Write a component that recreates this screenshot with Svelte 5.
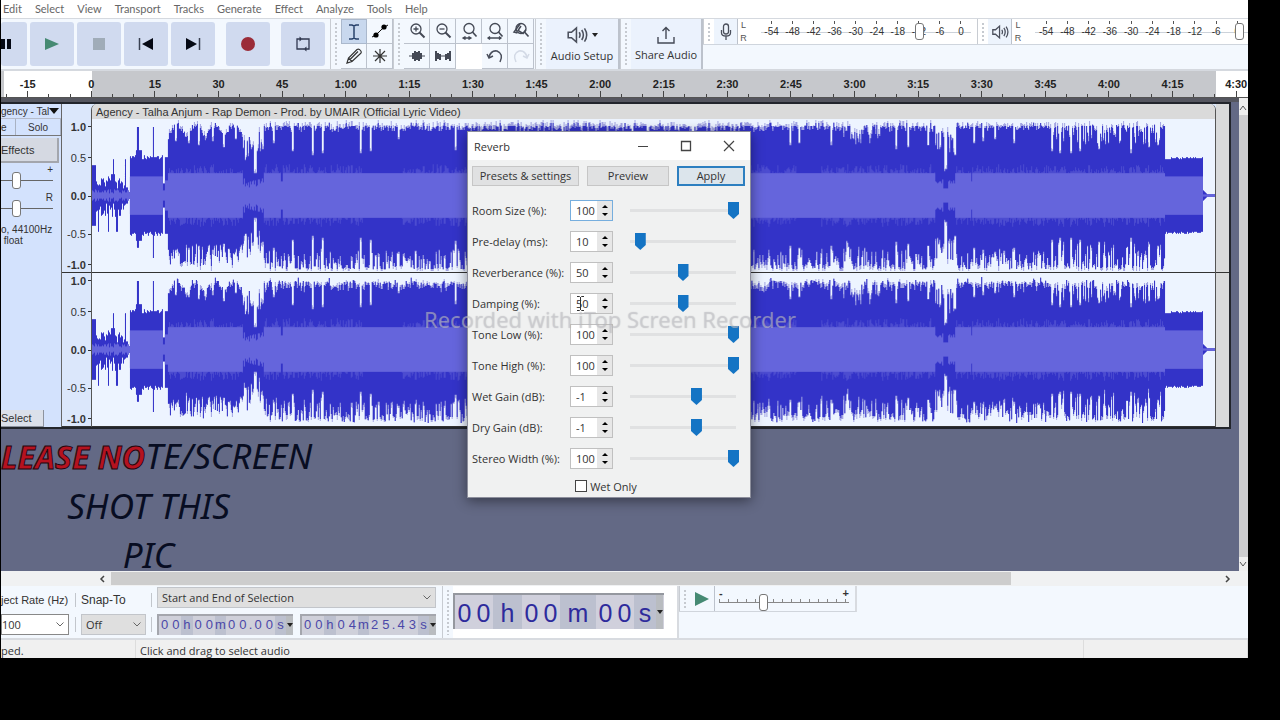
<script lang="ts">
  const menus = ['Edit', 'Select', 'View', 'Transport', 'Tracks', 'Generate', 'Effect', 'Analyze', 'Tools', 'Help'];
  const times = ['-15', '0', '15', '30', '45', '1:00', '1:15', '1:30', '1:45', '2:00', '2:15', '2:30', '2:45', '3:00', '3:15', '3:30', '3:45', '4:00', '4:15', '4:30'];
  const levels = ['-54', '-48', '-42', '-36', '-30', '-24', '-18', '-12', '-6', '0'];
  const meters = [
    { name: 'Recording level', icon: 'mic', value: 77 },
    { name: 'Playback level', icon: 'speaker', value: 99 }
  ];
  const scale = ['1.0', '0.5', '0.0', '-0.5', '-1.0'];

  const params = [
    { label: 'Room Size (%):', value: 100, min: 0, max: 100 },
    { label: 'Pre-delay (ms):', value: 10, min: 0, max: 130 },
    { label: 'Reverberance (%):', value: 50, min: 0, max: 100 },
    { label: 'Damping (%):', value: 50, min: 0, max: 100 },
    { label: 'Tone Low (%):', value: 100, min: 0, max: 100 },
    { label: 'Tone High (%):', value: 100, min: 0, max: 100 },
    { label: 'Wet Gain (dB):', value: -1, min: -20, max: 10 },
    { label: 'Dry Gain (dB):', value: -1, min: -20, max: 10 },
    { label: 'Stereo Width (%):', value: 100, min: 0, max: 100 }
  ];

  const clipWidth = 1124;
  const mid = 76;

  // quiet moments inside the loud part: [position, height left]
  const dips = [
    [83, 54], [96, 52], [106, 50], [120, 54], [131, 48], [143, 56], [153, 38], [162, 22], [163, 22], [170, 46], [181, 52],
    [200, 44], [220, 40], [230, 42], [268, 42], [278, 44], [306, 56], [363, 45], [410, 55], [470, 48], [540, 52], [600, 46],
    [698, 50], [707, 52], [739, 50], [804, 46], [816, 48], [836, 50], [853, 24], [854, 26], [863, 40], [862, 44], [882, 52],
    [891, 54], [903, 56], [922, 52], [960, 44], [968, 42], [979, 42], [988, 44], [1007, 46], [1039, 42], [1057, 48], [1066, 50]
  ];

  function random(seed: number) {
    let s = seed;
    return () => {
      s = (s * 16807) % 2147483647;
      return s / 2147483647;
    };
  }

  function peakAt(x: number, r: number, low: boolean) {
    if (x < 36) return r > 0.88 ? 36 : x < 4 ? 30 : 7 + r * 14 * (x > 8 && x < 30 ? 1.2 : 0.7);
    if (x < 38) return 3;
    if (x < 71) {
      if (x === 45 || x === 46) return low ? 52 : 68;
      if (x === 61) return low ? 62 : 68;
      return x > 43 && x < 50 ? 45 : 36 + r * 4;
    }
    if (x < 76) return x < 73 ? 12 : 38;
    if (x >= 151 && x < 172) return 34 + r * 30;
    if (x >= 844 && x < 864) return 42 + r * 22;
    if (x < 172) return low ? 48 + r * 22 : 54 + Math.abs(Math.sin(x / 6)) * 13 + r * 5;
    if (x < 1074) {
      const soft = (x > 750 && x < 790) || x > 958;
      return low ? 73 - r * r * (soft ? 28 : 20) : 69 - r * r * (soft ? 18 : 6) + (r > 0.4 && r < 0.45 ? 4 : 0);
    }
    if (x < 1112) return 36 + r * 2;
    return Math.max(1, 5 - (x - 1112));
  }

  function rmsAt(x: number, r: number) {
    if (x < 38) return 2 + r * 4;
    if (x < 71) return 19;
    if (x < 76) return x < 73 ? 5 : 15;
    if (x >= 151 && x < 172) return 8 + r * 9;
    if (x >= 844 && x < 864) return Math.abs(x - 854) < 3 ? 7 : 12 + r * 4;
    if ((x >= 189 && x < 191) || x === 880) return 14;
    if (x < 1074) return 22;
    if (x < 1112) return 19;
    return 1;
  }

  function shape(fn: (x: number, low: boolean) => number) {
    let top = '';
    let bottom = '';
    for (let x = 0; x < clipWidth; x++) {
      const up = Math.round(mid - Math.min(75, fn(x, false)));
      const down = Math.round(mid + Math.min(75, fn(x, true)));
      top += `V${up}H${x + 1}`;
      bottom = `V${down}H${x}` + bottom;
    }
    return `M0 ${mid}${top}${bottom}Z`;
  }

  function makeChannel(seed: number, drop: number) {
    const rnd = random(seed);
    const values = Array.from({ length: clipWidth }, () => [rnd(), rnd(), rnd()]);
    const dipMap = new Map(dips.map(([x, h]) => [x, h]));
    const loud = (x: number) => x > 76 && x < 1074;
    const peak = (x: number, low: boolean) => {
      const p = peakAt(x, values[x][low ? 1 : 0], low) - (loud(x) ? drop * values[x][2] : 0);
      return Math.min(p, dipMap.get(x) ?? dipMap.get(x - 1) ?? 80);
    };
    const streaky = (x: number) => loud(x) && !(x > 270 && x < 310) && !(x > 704 && x < 730) && rmsAt(x, 0) === 22;
    return {
      haze: shape((x, low) => peak(x, low) + (loud(x) ? values[x][2] * 5 : 0)),
      peak: shape(peak),
      streak: shape((x, low) => rmsAt(x, values[x][2]) + (streaky(x) ? values[x][low ? 1 : 2] ** 2 * 9 : 0)),
      rms: shape((x) => rmsAt(x, values[x][2]))
    };
  }

  const channels = [makeChannel(4711, 0), makeChannel(4711, 8)];
</script>

{#snippet timeField(text: string, label: string)}
  <div class="time" role="group" aria-label={label}>
    {#each text.split('') as ch}
      <span class:unit={/[hms]/.test(ch)} class:dot={ch === '.'}>{ch}</span>
    {/each}
    <button class="caret" aria-label="Time format"></button>
  </div>
{/snippet}

{#snippet speaker(size: number)}
  <svg width={size} height={size} viewBox="0 0 20 20" fill="none" stroke="#4a4f5c" stroke-width="1.4">
    <path d="M2 7.5v5h3l4.500 4V3.500l-4.500 4z" />
    <path d="M12 7.500q1.500 2.500 0 5M14.300 5.500q3 4.500 0 9M16.800 4q4 6 0 12" />
  </svg>
{/snippet}

<div class="window">
  <nav class="menu">
    {#each menus as item}
      <button>{item}</button>
    {/each}
  </nav>

  <div class="toolbars">
    <div class="transport">
      <button class="pause" aria-label="Pause"><svg width="12" height="12"><path d="M0 1h4v10H0zM6 1h4v10H6z" fill="#050914" /></svg></button>
      <button aria-label="Play"><svg width="14" height="14"><path d="M0 1v12l14-6z" fill="#468a73" /></svg></button>
      <button aria-label="Stop"><svg width="12" height="12"><path d="M0 0h12v12H0z" fill="#a0acb8" /></svg></button>
      <button aria-label="Skip to start"><svg width="16" height="14"><path d="M1.500 1v12" stroke="#3a4152" stroke-width="1.500" /><path d="M15 1v12L4 7z" fill="#050914" /></svg></button>
      <button aria-label="Skip to end"><svg width="16" height="14"><path d="M14.500 1v12" stroke="#3a4152" stroke-width="1.500" /><path d="M1 1v12l11-6z" fill="#050914" /></svg></button>
      <button class="apart" aria-label="Record"><svg width="14" height="14"><circle cx="7" cy="7" r="7" fill="#9b2c38" /></svg></button>
      <button class="apart" aria-label="Loop">
        <svg width="16" height="16" fill="none" stroke="#303850" stroke-width="1.300"><path d="M5 3H2v10h7M11 13h3V3H7" /><path d="M4.500 .5v5L7.500 3zM11.500 10.500v5L8.500 13z" fill="#303850" stroke="none" /></svg>
      </button>
    </div>
    <div class="grip"></div>
    <div class="tools">
      <button class="active" aria-label="Selection tool"><svg width="16" height="18" fill="none" stroke="#27416b" stroke-width="1.500"><path d="M3 2h3l2 1 2-1h3M8 3v12M3 16h3l2-1 2 1h3" /></svg></button>
      <button aria-label="Envelope tool"><svg width="18" height="16"><path d="M1 14l4-2 7-7 5-3" stroke="#111" /><circle cx="5" cy="12" r="2.600" /><circle cx="13" cy="4" r="2.600" /></svg></button>
      <button aria-label="Draw tool"><svg width="18" height="18" fill="none" stroke="#333" stroke-width="1.200"><path d="M2 16l1.500-5L12 2.500q2-1 3.500 1t0 3L7 14.500zM3.500 11l3.500 3.500M5 12.500l8-8" /></svg></button>
      <button aria-label="Multi-tool"><svg width="16" height="16" stroke="#333" stroke-width="1.200"><path d="M8 1v14M1 8h14M3 3l10 10M13 3L3 13" /></svg></button>
    </div>
    <div class="grip"></div>
    <div class="tools zooms">
      {#each ['Zoom in', 'Zoom out', 'Fit selection', 'Fit project', 'Zoom toggle'] as label, i}
        <button aria-label={label}>
          <svg width="18" height="18" fill="none" stroke="#444955" stroke-width="1.300">
            {#if i < 2}
              <circle cx="8" cy="7" r="5" /><path d="M11.500 10.500l5 5" stroke-width="2" /><path d={i === 0 ? 'M5.500 7h5M8 4.500v5' : 'M5.500 7h5'} />
            {:else}
              <circle cx="9" cy="6.500" r="5" /><path d="M12.500 10l4 4.500" stroke-width="1.700" />
              {#if i === 2}<path d="M3 16h8M5.500 14.500L3 16l2.500 1.500M8.500 14.500L11 16l-2.500 1.500" />{/if}
              {#if i === 3}<path d="M2 16h13M4 14.500L2 16l2 1.500M13 14.500l2 1.500-2 1.500" />{/if}
              {#if i === 4}<path d="M8 2l-6 8 3.500 1M9 4l-3 4.500 5 3 3-4" stroke-width="1.500" />{/if}
            {/if}
          </svg>
        </button>
      {/each}
      <button aria-label="Trim outside selection"><svg width="18" height="14" stroke="#444955" stroke-width="2"><path d="M1 7h16" stroke-width="1" /><path d="M5 4v6M7 2v10M9 3v8M11 2v10M13 4v6" /></svg></button>
      <button aria-label="Silence selection"><svg width="18" height="14" stroke="#444955" stroke-width="2"><path d="M5 7h8" stroke-width="1" /><path d="M2 2v10M4 4v6M6 5v6M12 5v6M14 4v6M16 2v10" /></svg></button>
      <i></i>
      <button aria-label="Undo"><svg width="18" height="16" fill="none" stroke="#4a4f5c" stroke-width="1.500"><path d="M3 9q2-7 8-6 7 3 3 11M1 6l2 4 4-2" /></svg></button>
      <button aria-label="Redo"><svg width="18" height="16" fill="none" stroke="#d3dae6" stroke-width="1.500"><path d="M15 9q-2-7-8-6-7 3-3 11M17 6l-2 4-4-2" /></svg></button>
    </div>
    <div class="grip"></div>
    <button class="big">
      <span>{@render speaker(22)}<b></b></span>
      Audio Setup
    </button>
    <div class="grip"></div>
    <button class="big share">
      <svg width="20" height="20" fill="none" stroke="#444955" stroke-width="1.400"><path d="M2 12v6h16v-6M10 14V3M6.500 6L10 2.500 13.500 6" /></svg>
      Share Audio
    </button>
    <div class="meters">
      {#each meters as meter}
        <div class="meter">
          <div class="grip"></div>
          <button class="meter-button" aria-label={meter.name}>
            {#if meter.icon === 'mic'}
              <svg width="12" height="18" fill="none" stroke="#4a4f5c" stroke-width="1.300"><rect x="3.500" y="1" width="5" height="10" rx="2.500" /><path d="M1.500 7v3q0 3 4.500 3t4.500-3V7M6 13v4" /></svg>
            {:else}
              {@render speaker(18)}
            {/if}
          </button>
          <div class="sides"><span>L</span><span>R</span></div>
          <div class="levels">
            <div class="level-row">
              {#each levels as level}
                <span>{level}</span>
              {/each}
            </div>
            <input type="range" aria-label={meter.name} value={meter.value} />
          </div>
        </div>
      {/each}
    </div>
  </div>

  <div class="ruler">
    <div class="ruler-row">
      {#each times as time}
        <div class="mark">
          <span>{time}</span>
          <div class="ticks"><i></i><i class="major"></i><i></i></div>
        </div>
      {/each}
    </div>
  </div>

  <div class="project">
    <div class="canvas">
      <div class="track">
        <div class="panel">
          <button class="name">gency - Tal<i></i></button>
          <div class="pair"><button>e</button><button>Solo</button></div>
          <button class="effects">Effects</button>
          <div class="gain"><span>+</span><input type="range" aria-label="Gain" value="26" /></div>
          <div class="gain"><span>R</span><input type="range" aria-label="Pan" value="26" /></div>
          <p>o, 44100Hz<br />&nbsp;float</p>
          <button class="select">Select</button>
        </div>
        <div class="scales">
          {#each channels as _}
            <div class="scale">
              {#each scale as mark, i}
                <span class:strong={i % 2 === 0}>{mark}</span>
              {/each}
            </div>
          {/each}
        </div>
        <div class="clip">
          <div class="clip-title">Agency - Talha Anjum - Rap Demon - Prod. by UMAIR (Official Lyric Video)</div>
          {#each channels as channel}
            <svg class="wave" viewBox="0 0 {clipWidth} 152" preserveAspectRatio="none">
              <path d={channel.haze} fill="#a3a5e2" />
              <path d={channel.peak} fill="#3333c8" />
              <path d={channel.streak} fill="#4c4cd0" />
              <path d={channel.rms} fill="#6565dc" />
            </svg>
          {/each}
        </div>
        <div class="after"></div>
      </div>
      <div class="note">
        <div class="first"><strong>LEASE NO</strong>TE/SCREEN</div>
        <div>SHOT THIS</div>
        <div>PIC</div>
      </div>
    </div>
    <div class="vbar">
      <svg width="8" height="14" fill="none" stroke="#555"><path d="M1 9l3-4 3 4" /></svg>
      <div></div>
      <svg width="8" height="14" fill="none" stroke="#555"><path d="M1 5l3 4 3-4" /></svg>
    </div>
  </div>

  <div class="hbar">
    <svg width="10" height="12" fill="none" stroke="#444" stroke-width="1.500"><path d="M7 3L4 6l3 3" /></svg>
    <div class="rail"><div></div></div>
    <svg width="10" height="12" fill="none" stroke="#444" stroke-width="1.500"><path d="M4 3l3 3-3 3" /></svg>
  </div>

  <div class="bottom">
    <div class="field rate">
      <label for="rate">ject Rate (Hz)</label>
      <select id="rate"><option>100</option></select>
    </div>
    <div class="split"></div>
    <div class="field snap">
      <label for="snap">Snap-To</label>
      <select id="snap"><option>Off</option></select>
    </div>
    <div class="split"></div>
    <div class="field range">
      <select aria-label="Selection mode"><option>Start and End of Selection</option></select>
      <div class="range-times">
        {@render timeField('00h00m00.00s', 'Selection start')}
        {@render timeField('00h04m25.43s', 'Selection end')}
      </div>
    </div>
    <div class="grip"></div>
    <div class="position">
      <div class="clock" role="group" aria-label="Audio position">
        {#each '00h00m00s'.split('') as ch}
          <span class={/\d/.test(ch) ? 'digit' : `unit ${ch}`}>{ch}</span>
        {/each}
        <button class="caret" aria-label="Time format"></button>
      </div>
    </div>
    <div class="speed">
      <div class="speed-bar">
        <div class="grip"></div>
        <button aria-label="Play at speed"><svg width="14" height="14"><path d="M0 0v14l14-7z" fill="#468a73" /></svg></button>
        <div class="speed-slider">
          <div class="ends"><span>-</span><span>+</span></div>
          <input type="range" aria-label="Playback speed" value="33" />
        </div>
      </div>
    </div>
  </div>

  <footer class="status">
    <span>ped.</span>
    <span>Click and drag to select audio</span>
    <span></span>
  </footer>

  <div class="dialog" role="dialog" aria-label="Reverb">
    <header>
      <span>Reverb</span>
      <button aria-label="Minimize"><svg width="12" height="12" stroke="#444"><path d="M1 6.500h10" /></svg></button>
      <button aria-label="Maximize"><svg width="12" height="12" fill="none" stroke="#444" stroke-width="1.300"><path d="M1.500 1.500h9v9h-9z" /></svg></button>
      <button aria-label="Close"><svg width="12" height="12" stroke="#444" stroke-width="1.200"><path d="M1 1l10 10M11 1L1 11" /></svg></button>
    </header>
    <div class="actions">
      <button>Presets &amp; settings</button>
      <button>Preview</button>
      <button class="apply">Apply</button>
    </div>
    {#each params as p, i}
      <div class="param">
        <label for="param{i}">{p.label}</label>
        <div class="spin" class:focus={i === 0}>
          <input id="param{i}" type="text" value={p.value} />
          <div class="arrows">
            <button aria-label="Increase"><svg width="6" height="4"><path d="M0 4h6L3 1z" /></svg></button>
            <button aria-label="Decrease"><svg width="6" height="4"><path d="M0 0h6L3 3z" /></svg></button>
          </div>
          {#if i === 3}
            <svg class="cursor" width="9" height="17" fill="none" stroke="#333"><path d="M1 1.500h2.500l1 1 1-1H8M4.500 2v13M1 15.500h2.500l1-1 1 1H8" /></svg>
          {/if}
        </div>
        <input type="range" aria-label={p.label} min={p.min} max={p.max} value={p.value} />
      </div>
    {/each}
    <label class="wet"><input type="checkbox" /> Wet Only</label>
  </div>

  <div class="watermark">Recorded with iTop Screen Recorder</div>
</div>

<style>
  :global(body) {
    margin: 0;
    background: #000;
  }

  .window {
    position: relative;
    margin: 0 32px 0 1px;
    overflow: hidden;
    background: #f3f8fe;
    color: #333;
    font: 11px 'Open Sans', sans-serif;
  }

  .window * {
    box-sizing: border-box;
  }

  button,
  input,
  select {
    margin: 0;
    padding: 0;
    border: 0;
    background: none;
    color: inherit;
    font: inherit;
  }

  svg {
    display: block;
    flex: none;
  }

  .menu {
    display: flex;
    gap: 13px;
    height: 18px;
    padding-left: 2px;
    background: #fff;
    color: #666;
    font-family: Lato, sans-serif;
  }

  .menu button {
    line-height: 16px;
  }

  .toolbars {
    display: flex;
    height: 53px;
    border-top: 1px solid #d5d9df;
    border-bottom: 2px solid #d5d9df;
  }

  .grip {
    flex: none;
    width: 11px;
    border-left: 1px solid #c8ccd2;
    background: radial-gradient(#c6cad0 1px, transparent 1px) 0 0 / 4px 4px content-box;
    padding: 3px;
  }

  .transport {
    display: flex;
    flex: none;
    gap: 3px;
    width: 329px;
    padding: 3px 0;
  }

  .transport button {
    display: grid;
    place-items: center;
    width: 44px;
    height: 44px;
    border-radius: 3px;
    background: #d0daef;
  }

  .transport .pause {
    width: 26px;
    justify-items: start;
  }

  .transport .apart {
    margin-left: 8px;
  }

  .tools {
    display: grid;
    flex: none;
    grid-template-columns: repeat(2, 26px);
    grid-template-rows: 25px 25px;
  }

  .zooms {
    grid-template-columns: repeat(5, 26px);
    margin-right: 1px;
  }

  .tools button {
    display: grid;
    place-items: center;
    border-right: 1px solid #bcc2cc;
    border-bottom: 1px solid #bcc2cc;
  }

  .tools i {
    background: #fff;
  }

  .tools .active {
    background: #c8d8ee;
    border: 1px solid #aab8cc;
  }

  .big {
    display: flex;
    flex: none;
    flex-direction: column;
    align-items: center;
    justify-content: center;
    gap: 2px;
    width: 74px;
    border-right: 2px solid #bcc2cc;
    background: #ebf2fd;
    line-height: 16px;
    white-space: nowrap;
  }

  .big span {
    display: flex;
    align-items: center;
    gap: 4px;
  }

  .big b,
  .caret::before {
    content: '';
    border: 3px solid transparent;
    border-top: 4px solid #222;
    border-bottom: 0;
  }

  .share {
    width: 72px;
  }

  .meters {
    display: grid;
    flex: 1;
    grid-template-columns: 275fr 271fr;
    grid-template-rows: 26px;
    min-width: 0;
  }

  .meter {
    display: flex;
    min-width: 0;
    border-bottom: 1px solid #cfd5dd;
    background: #fff;
  }

  .meter:first-child {
    padding-right: 6px;
  }

  .meter-button {
    display: grid;
    flex: none;
    place-items: center;
    width: 24px;
    border-right: 1px solid #bcc2cc;
    background: #edf4fd;
  }

  .sides {
    display: grid;
    flex: none;
    width: 11px;
    color: #555;
    font: 9px/12px 'Liberation Sans', sans-serif;
    text-align: center;
  }

  .levels {
    display: grid;
    flex: 1;
    min-width: 0;
    padding-left: 12px;
  }

  .level-row,
  .levels input {
    grid-area: 1 / 1;
  }

  .level-row {
    display: grid;
    grid-template-columns: repeat(10, 1fr);
    background: linear-gradient(#ccd2da, #ccd2da) 0 13px / 100% 1px no-repeat;
    font: 10px 'Liberation Sans', sans-serif;
  }

  .level-row span {
    background: linear-gradient(#555, #555) 50% 2px / 1px 3px no-repeat;
    line-height: 25px;
    text-align: center;
  }

  input[type='range'] {
    width: 100%;
    min-width: 0;
    appearance: none;
    outline: none;
  }

  input[type='range']::-webkit-slider-thumb {
    width: 9px;
    height: 17px;
    appearance: none;
    border: 1px solid #777;
    border-radius: 3px;
    background: #fff;
  }

  .levels input {
    margin: 2px;
    height: 20px;
    width: calc(100% - 4px);
  }

  .ruler {
    height: 27px;
    overflow: hidden;
    border-bottom: 1px solid #555;
    background: linear-gradient(90deg, #c6c8cc 3px, #fff 3px 91px, #c6c8cc 91px calc(100% - 32px), #fff calc(100% - 32px));
  }

  .ruler-row {
    display: grid;
    grid-template-columns: repeat(20, 1fr);
    margin: 0 -20px 0 -5px;
    color: #222;
    font: bold 11px 'Liberation Sans', sans-serif;
  }

  .mark span {
    display: block;
    height: 20px;
    line-height: 26px;
    text-align: center;
  }

  .ticks {
    display: flex;
    align-items: flex-end;
    justify-content: space-around;
    height: 6px;
  }

  .ticks i {
    width: 1px;
    height: 3px;
    background: #444;
  }

  .ticks .major {
    height: 6px;
  }

  .project {
    display: flex;
    height: 473px;
    background: #636985;
  }

  .canvas {
    flex: 1;
    min-width: 0;
    border-top: 4px solid #55565f;
  }

  .track {
    display: flex;
    height: 327px;
    margin-right: 8px;
    border: 2px solid #22252c;
    border-left: 0;
    background: #dbe7fb;
    font-family: 'Liberation Sans', sans-serif;
  }

  .panel {
    display: flex;
    flex: none;
    flex-direction: column;
    width: 61px;
    border-right: 1px solid #666;
    background: #d3e2fd;
  }

  .panel .name {
    display: flex;
    align-items: center;
    height: 15px;
    border-bottom: 1px solid #b6bccb;
    font-size: 10px;
    white-space: nowrap;
  }

  .name i {
    border: 5px solid transparent;
    border-top: 6px solid #111;
    border-bottom: 0;
  }

  .pair {
    display: grid;
    grid-template-columns: 15px 1fr;
    height: 17px;
    border-bottom: 1px solid #777;
    font-size: 10px;
  }

  .pair button {
    border-right: 1px solid #a9b2c3;
    text-align: left;
  }

  .pair button + button {
    text-align: center;
  }

  .effects {
    height: 25px;
    margin: 2px 2px 0 0;
    border-right: 2px solid #a3a6ad;
    border-bottom: 2px solid #a3a6ad;
    background: #d5d9e2;
    text-align: left;
  }

  .gain {
    height: 28px;
    padding-right: 8px;
    font-size: 10px;
  }

  .gain span {
    display: block;
    height: 8px;
    line-height: 14px;
    text-align: right;
  }

  .gain input {
    display: block;
    height: 18px;
    background: linear-gradient(#666, #666) 0 50% / 100% 1px no-repeat;
  }

  .panel p {
    flex: 1;
    margin: 5px 0 0;
    font-size: 10px;
    line-height: 11px;
    white-space: nowrap;
  }

  .select {
    width: 43px;
    height: 17px;
    border-right: 1px solid #8d939f;
    border-bottom: 1px solid #8d939f;
    background: #dbe0ea;
    text-align: left;
  }

  .scales {
    display: flex;
    flex: none;
    flex-direction: column;
    width: 29px;
    padding-top: 15px;
  }

  .scale {
    display: grid;
    flex: 1;
    grid-template-rows: 15fr 47fr 29fr 47fr 14fr;
    align-items: center;
    min-height: 0;
    border-bottom: 1px solid #333;
  }

  .scale span {
    padding-right: 5px;
    background: linear-gradient(#333, #333) 100% 50% / 3px 1px no-repeat;
    line-height: 12px;
    text-align: right;
  }

  .scale .strong {
    font-weight: bold;
  }

  .clip {
    display: flex;
    flex: 1;
    flex-direction: column;
    min-width: 0;
    border: 1px solid #555;
    border-width: 0 1px;
    border-radius: 6px 6px 0 0;
    background: #edf4ff;
    overflow: hidden;
  }

  .clip-title {
    height: 15px;
    padding-left: 4px;
    background: #dadada;
    line-height: 16px;
    white-space: nowrap;
  }

  .wave {
    flex: 1;
    width: 100%;
    min-height: 0;
    border-bottom: 1px solid #333;
  }

  .after {
    width: 13px;
    background: linear-gradient(#333, #333) 0 168px / 100% 1px no-repeat #d9dadb;
  }

  .note {
    width: 295px;
    padding-top: 2px;
    color: #080d22;
    font: italic 35px/49px 'Noto Sans', sans-serif;
    text-align: center;
    white-space: nowrap;
  }

  .first {
    text-align: left;
  }

  .note strong {
    color: #b5121f;
    font-size: 32px;
    font-family: 'Open Sans', sans-serif;
    -webkit-text-stroke: 1px #22060f;
  }

  .vbar {
    display: flex;
    flex-direction: column;
    width: 9px;
    padding-top: 3px;
    background: #eee;
  }

  .vbar div {
    flex: 1;
    background: #cdcdcf;
  }

  .hbar {
    display: flex;
    align-items: center;
    height: 15px;
    padding: 0 16px 0 96px;
    background: #f0f1f2;
  }

  .rail {
    flex: 1;
    height: 13px;
    margin-left: 4px;
  }

  .rail div {
    width: 81%;
    height: 100%;
    background: #cdcdcd;
  }

  .bottom {
    display: flex;
    height: 54px;
    border-bottom: 2px solid #d8dbe0;
  }

  select {
    width: 100%;
    height: 21px;
    padding-left: 4px;
    border: 1px solid #c2c5ca;
    border-radius: 0;
    appearance: none;
    background: url("data:image/svg+xml,%3Csvg xmlns='http://www.w3.org/2000/svg' width='8' height='5' fill='none' stroke='%23666'%3E%3Cpath d='M.5.5L4 4 7.500.5'/%3E%3C/svg%3E") right 4px center no-repeat #dfdfdf;
  }

  .field {
    display: grid;
    flex: none;
    grid-template: 27px 22px / 100%;
    align-items: center;
  }

  .split {
    flex: none;
    width: 1px;
    height: 48px;
    background: linear-gradient(#c2c6cc 14px, transparent 14px 24px, #c2c6cc 24px 39px, transparent 39px) 0 7px no-repeat;
  }

  .rate {
    width: 68px;
    margin-right: 6px;
  }

  .rate select {
    padding: 0;
    border-color: #888;
    background-color: #fff;
  }

  .field label {
    font: 12px 'Liberation Sans', sans-serif;
    white-space: nowrap;
  }

  .rate label {
    font-size: 11px;
  }

  .snap {
    width: 65px;
    margin: 0 5px;
  }

  .range {
    width: 279px;
    margin: 0 6px 0 5px;
  }

  .range select {
    align-self: start;
    margin-top: 1px;
  }

  .range-times {
    display: grid;
    grid-template-columns: 1fr 1fr;
    gap: 7px;
  }

  .time {
    display: flex;
    height: 21px;
    border: 2px solid #a4a6ad;
    border-width: 2px 0 0 2px;
    background: #cfd0da;
    color: #4a47a8;
    font: 13px/18px 'Liberation Sans', sans-serif;
  }

  .time span {
    flex: 1;
    text-align: center;
  }

  .time .dot {
    flex: none;
    width: 4px;
  }

  .time .unit,
  .clock .unit {
    background: #bcc0cf;
  }

  .caret {
    display: grid;
    flex: none;
    place-items: center;
    width: 7px;
    background: #b9bcc0;
  }

  .position {
    flex: none;
    width: 226px;
    padding: 7px 0 10px;
    border-right: 2px solid #d8dbe0;
    background: #fff;
  }

  .clock {
    display: flex;
    width: 211px;
    height: 36px;
    border: 2px solid #95989f;
    border-width: 2px 0 0 2px;
    background: #d0d0dc;
    color: #2e2b9c;
    font: 25px/36px 'Liberation Sans', sans-serif;
  }

  .clock span {
    text-align: center;
  }

  .digit {
    width: 19px;
  }

  .clock .h {
    width: 29px;
  }

  .clock .m {
    width: 36px;
  }

  .clock .s {
    width: 22px;
  }

  .speed {
    flex: 1;
  }

  .speed-bar {
    display: flex;
    width: 178px;
    height: 26px;
    border-right: 2px solid #d8dbe0;
    border-bottom: 1px solid #d0d5dc;
  }

  .speed-bar button {
    display: grid;
    place-items: center;
    width: 25px;
    border-right: 1px solid #bcc2cc;
  }

  .speed-slider {
    flex: 1;
    padding: 2px 6px 0 4px;
  }

  .ends {
    display: flex;
    justify-content: space-between;
    height: 6px;
    font: bold 11px/10px 'Liberation Sans', sans-serif;
  }

  .speed-slider input {
    display: block;
    height: 17px;
    background:
      repeating-linear-gradient(90deg, #888 0 1px, transparent 1px 9px) 0 5px / 100% 3px no-repeat,
      linear-gradient(#888, #888) 0 8px / 100% 1px no-repeat;
  }

  .status {
    display: flex;
    height: 18px;
    background: #f0f0f0;
    line-height: 22px;
  }

  .status span {
    flex: none;
    width: 135px;
    border-right: 1px solid #ddd;
  }

  .status span + span {
    flex: 1;
    padding-left: 4px;
  }

  .status span:last-child {
    flex: none;
    width: 164px;
  }

  .dialog {
    position: absolute;
    top: 131px;
    left: 466px;
    width: 284px;
    height: 367px;
    border: 1px solid #8d8f9c;
    background: #f0f1f1;
    box-shadow: 0 3px 12px rgb(0 0 0 / 45%);
  }

  .dialog header {
    display: flex;
    align-items: center;
    height: 28px;
    padding: 0 15px 0 6px;
    background: #fff;
    gap: 31px;
  }

  .dialog header span {
    flex: 1;
  }

  .actions {
    display: grid;
    grid-template-columns: 107px 82px 68px;
    gap: 8px;
    padding: 6px 5px 9px 4px;
  }

  .actions button {
    height: 20px;
    border: 1px solid #c6c6c6;
    background: #e0e1e2;
    line-height: 16px;
  }

  .actions .apply {
    border: 2px solid #2d7fc0;
    background: #dce5ec;
  }

  .param {
    display: grid;
    grid-template-columns: 98px 43px 112px;
    align-items: center;
    height: 31px;
    padding-left: 4px;
  }

  .param label {
    white-space: nowrap;
  }

  .param > input {
    height: 17px;
    margin-left: 14px;
    background: linear-gradient(#e0e1e2, #e0e1e2) 50% 50% / 106px 3px no-repeat;
  }

  .param > input::-webkit-slider-thumb {
    width: 11px;
    border: 0;
    border-radius: 0;
    background: #1474c4;
    clip-path: polygon(0 0, 100% 0, 100% 70%, 50% 100%, 0 70%);
  }

  .spin {
    position: relative;
    display: grid;
    grid-template-columns: 1fr 15px;
    height: 21px;
    border: 1px solid #c0c0c0;
    background: #fff;
  }

  .focus {
    border-color: #76aede;
  }

  .spin > input {
    min-width: 0;
    padding-left: 5px;
  }

  .arrows {
    display: grid;
    background: #e7e7e7;
  }

  .arrows button {
    display: grid;
    place-items: center;
  }

  .cursor {
    position: absolute;
    top: 1px;
    left: 5px;
  }

  .wet {
    display: flex;
    align-items: center;
    justify-content: center;
    gap: 3px;
    height: 24px;
    padding-right: 6px;
  }

  .wet input {
    width: 12px;
    height: 12px;
    appearance: none;
    border: 1px solid #444;
    background: #fff;
  }

  .watermark {
    position: absolute;
    top: 305px;
    left: 423px;
    color: rgb(212 212 220 / 45%);
    font-size: 22px;
    font-family: 'Noto Sans', sans-serif;
    line-height: 28px;
    white-space: nowrap;
    text-shadow: 0 0 1px rgb(120 120 120 / 40%);
  }
</style>
